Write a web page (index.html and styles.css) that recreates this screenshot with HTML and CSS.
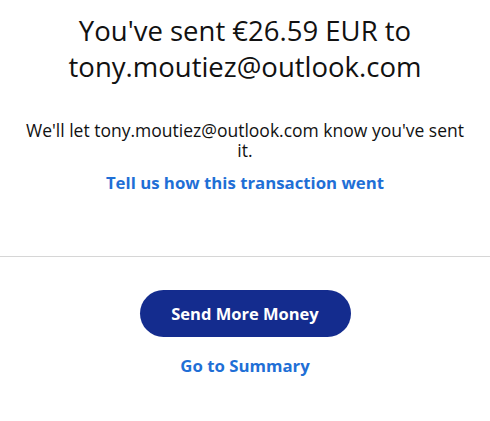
FILE: index.html
```html
<!DOCTYPE html>
<html>
<head>
<meta charset="utf-8">
<link rel="stylesheet" href="styles.css">
</head>
<body>
<main class="page">
  <section class="top">
    <h1 class="title">You've sent €26.59 EUR to tony.moutiez@outlook.com</h1>
    <p class="note">We'll let tony.moutiez@outlook.com know you've sent it.</p>
    <a class="link feedback" href="#">Tell us how this transaction went</a>
  </section>
  <hr class="divider">
  <section class="actions">
    <button class="btn-primary" type="button">Send More Money</button>
    <a class="link summary" href="#">Go to Summary</a>
  </section>
</main>
</body>
</html>
```
FILE: styles.css
```css
html, body {
  margin: 0;
  padding: 0;
  background: #ffffff;
}
body {
  font-family: "Open Sans", "Lato", sans-serif;
  color: #111111;
}
.page {
  width: 490px;
  display: flex;
  flex-direction: column;
}
.top {
  display: flex;
  flex-direction: column;
  align-items: center;
  padding: 13px 0 0;
  text-align: center;
}
.title {
  margin: 0;
  font-size: 27.5px;
  font-weight: 400;
  line-height: 36px;
  width: 400px;
  color: #111;
}
.note {
  margin: 35px 0 0;
  width: 446px;
  font-size: 17.5px;
  line-height: 20px;
}
.link {
  color: #1f6fd6;
  font-weight: 700;
  text-decoration: none;
  font-size: 16.8px;
  line-height: 23px;
}
.feedback {
  margin-top: 11px;
}
.divider {
  margin: 62px 0 0;
  border: 0;
  border-top: 1px solid #d6d6d6;
  height: 0;
}
.actions {
  display: flex;
  flex-direction: column;
  align-items: center;
  padding-top: 33px;
}
.btn-primary {
  width: 211px;
  height: 47px;
  border: 0;
  border-radius: 24px;
  background: #142c8e;
  color: #ffffff;
  font-family: inherit;
  font-size: 16.5px;
  font-weight: 700;
}
.summary {
  margin-top: 17px;
}
```
